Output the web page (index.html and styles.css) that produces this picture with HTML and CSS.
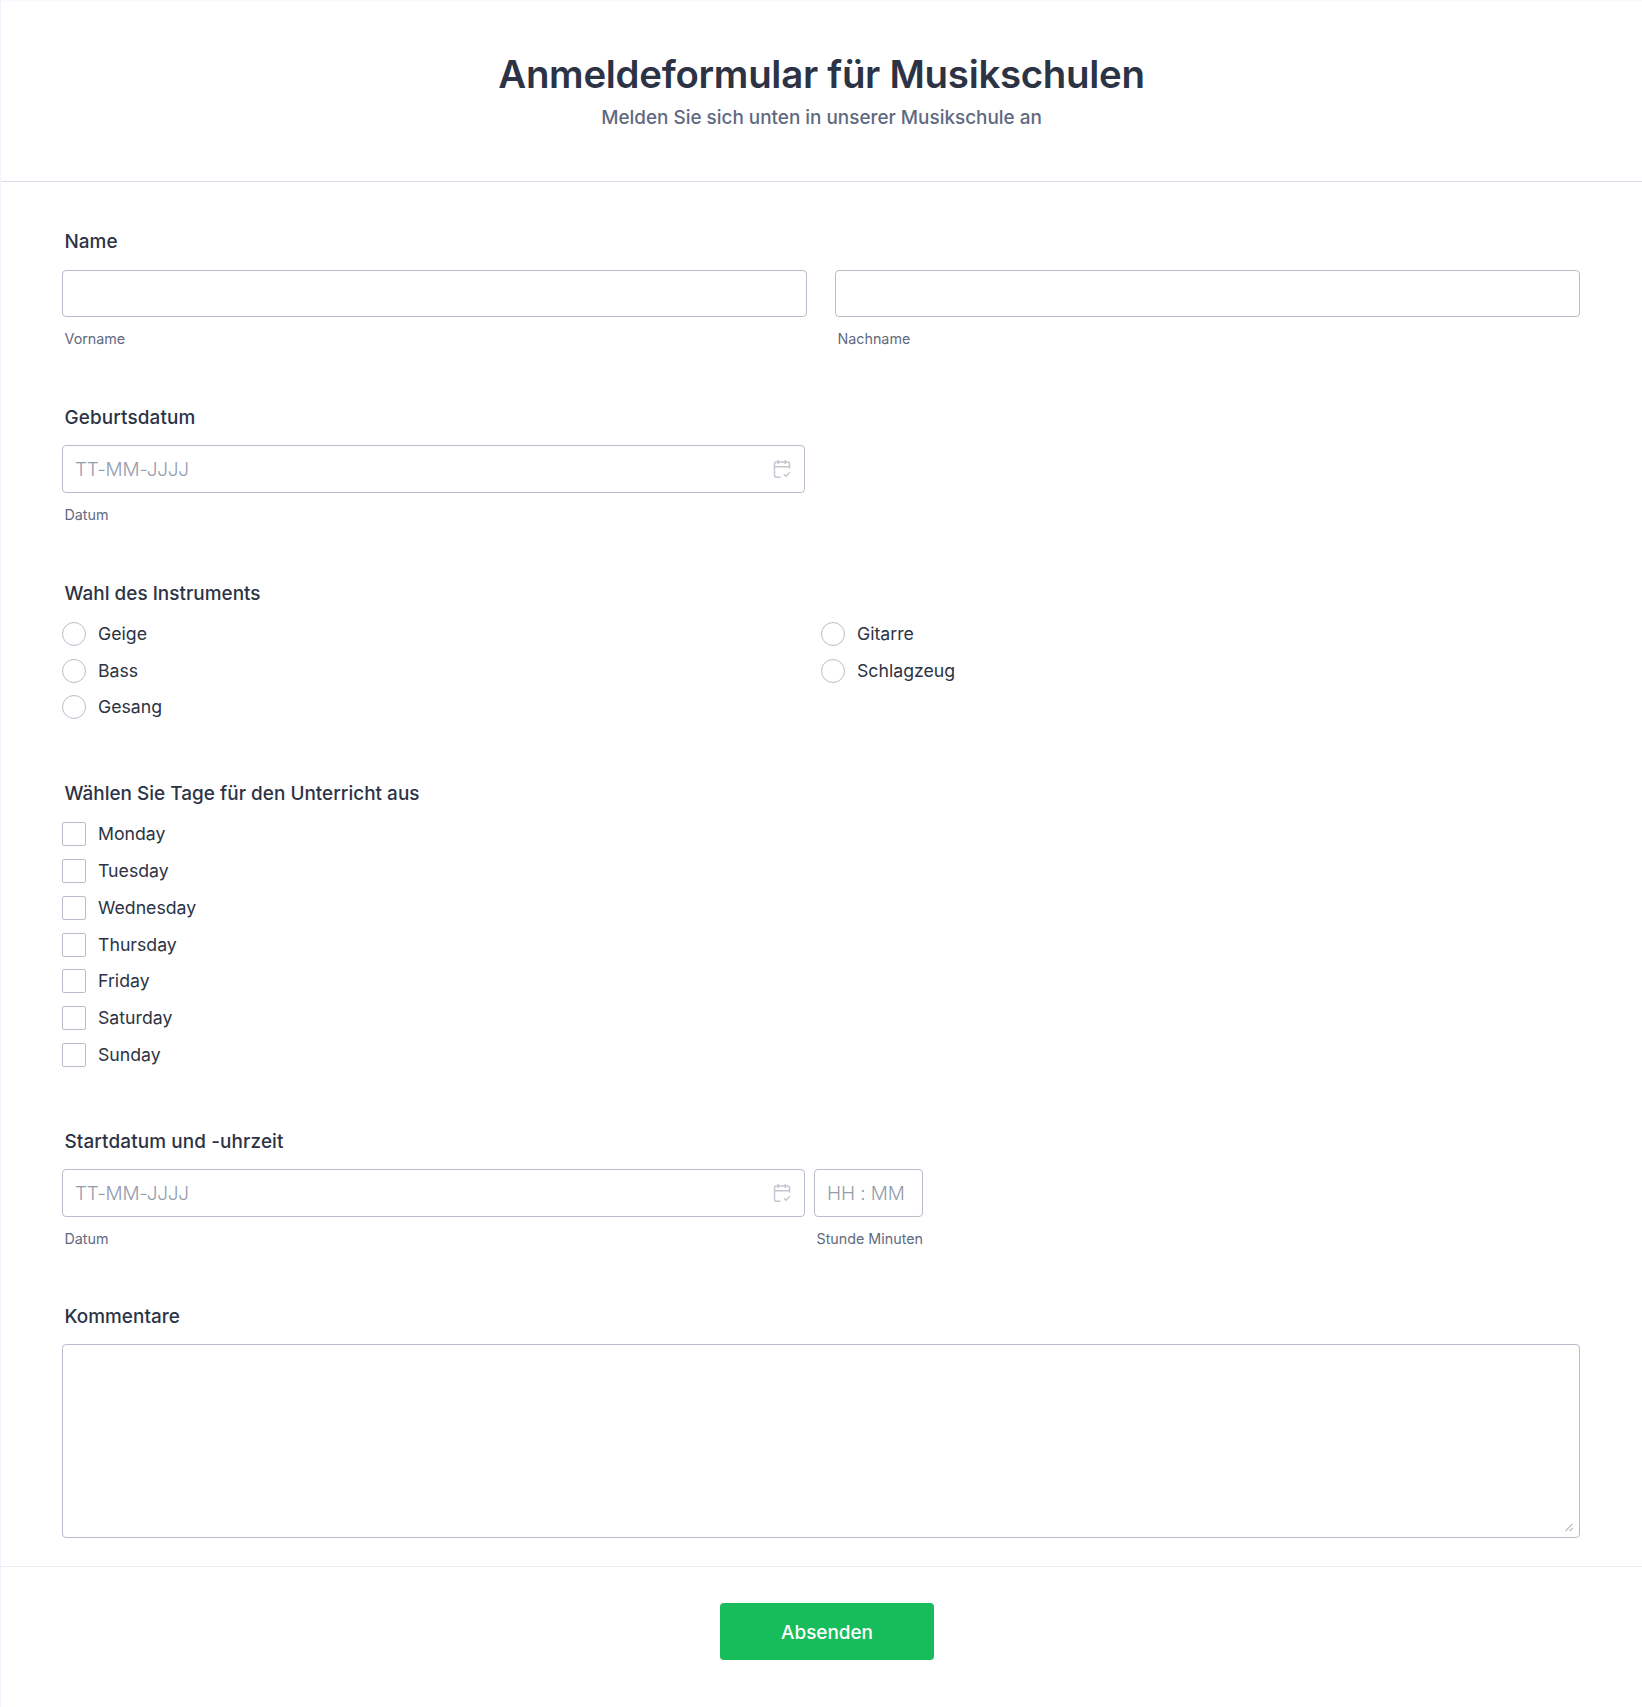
FILE: index.html
```html
<!DOCTYPE html>
<html lang="de">
<head>
<meta charset="utf-8">
<title>Anmeldeformular für Musikschulen</title>
<link rel="stylesheet" href="styles.css">
</head>
<body>
<form class="form">
  <header class="form-header">
    <h1 class="title">Anmeldeformular für Musikschulen</h1>
    <p class="subtitle">Melden Sie sich unten in unserer Musikschule an</p>
  </header>
  <main class="fields">
    <section class="field field-name">
      <h2 class="label">Name</h2>
      <div class="name-row">
        <div class="column"><input class="box" type="text" aria-label="Vorname"><span class="sublabel">Vorname</span></div>
        <div class="column"><input class="box" type="text" aria-label="Nachname"><span class="sublabel">Nachname</span></div>
      </div>
    </section>
    <section class="field field-birth">
      <h2 class="label">Geburtsdatum</h2>
      <div class="date-row">
        <div class="date">
          <div class="box"><span class="placeholder">TT-MM-JJJJ</span>
            <svg class="calendar" viewBox="0 0 18 20" fill="none"><path d="M7.5 18.2H3.6Q1.5 18.2 1.5 16.1V5Q1.5 3 3.5 3H14.5Q16.5 3 16.5 5V9.5M1.5 7.8H16.5M5.2 1V5M12.2 1V5M11 15.3L13 17.3L16.8 13.3"/></svg>
          </div>
          <span class="sublabel">Datum</span>
        </div>
      </div>
    </section>
    <section class="field field-instrument">
      <h2 class="label">Wahl des Instruments</h2>
      <div class="choices two-columns">
        <label class="choice"><input class="mark round" type="radio" name="instrument">Geige</label>
        <label class="choice"><input class="mark round" type="radio" name="instrument">Gitarre</label>
        <label class="choice"><input class="mark round" type="radio" name="instrument">Bass</label>
        <label class="choice"><input class="mark round" type="radio" name="instrument">Schlagzeug</label>
        <label class="choice"><input class="mark round" type="radio" name="instrument">Gesang</label>
      </div>
    </section>
    <section class="field field-days">
      <h2 class="label">Wählen Sie Tage für den Unterricht aus</h2>
      <div class="choices">
        <label class="choice"><input class="mark" type="checkbox">Monday</label>
        <label class="choice"><input class="mark" type="checkbox">Tuesday</label>
        <label class="choice"><input class="mark" type="checkbox">Wednesday</label>
        <label class="choice"><input class="mark" type="checkbox">Thursday</label>
        <label class="choice"><input class="mark" type="checkbox">Friday</label>
        <label class="choice"><input class="mark" type="checkbox">Saturday</label>
        <label class="choice"><input class="mark" type="checkbox">Sunday</label>
      </div>
    </section>
    <section class="field field-start">
      <h2 class="label">Startdatum und -uhrzeit</h2>
      <div class="date-row">
        <div class="date">
          <div class="box"><span class="placeholder">TT-MM-JJJJ</span>
            <svg class="calendar" viewBox="0 0 18 20" fill="none"><path d="M7.5 18.2H3.6Q1.5 18.2 1.5 16.1V5Q1.5 3 3.5 3H14.5Q16.5 3 16.5 5V9.5M1.5 7.8H16.5M5.2 1V5M12.2 1V5M11 15.3L13 17.3L16.8 13.3"/></svg>
          </div>
          <span class="sublabel">Datum</span>
        </div>
        <div class="time">
          <div class="box"><span class="placeholder time-placeholder">HH : MM</span></div>
          <span class="sublabel">Stunde Minuten</span>
        </div>
      </div>
    </section>
    <section class="field field-comments">
      <h2 class="label">Kommentare</h2>
      <div class="comments">
        <svg class="grip" viewBox="0 0 9 9"><path d="M0.5 8L7.5 0.8M4.7 8L7.8 5"/></svg>
      </div>
    </section>
  </main>
  <footer class="form-footer"><button class="submit" type="button">Absenden</button></footer>
</form>
</body>
</html>
```
FILE: styles.css
```css
* { box-sizing: border-box; }
body { margin: 0; background: #fff; color: #2c3345; font-family: Inter, "Liberation Sans", sans-serif; }
h1, h2, p { margin: 0; }
.form { height: 1707px; border-left: 1px solid #f3f3fe; border-top: 1px solid #fafafe; display: flex; flex-direction: column; }
.form-header { height: 181px; padding-top: 49px; text-align: center; border-bottom: 1px solid #d9dae7; }
.title { font-size: 38.4px; font-weight: 600; line-height: 48px; letter-spacing: -0.28px; }
.subtitle { margin-top: 8px; font-size: 18.9px; font-weight: 500; line-height: 24px; color: #5f6980; }
.fields { height: 1384px; padding: 48px 62px 0 61px; }
.label { height: 40px; padding-left: 2.5px; font-size: 18.9px; font-weight: 500; line-height: 24px; letter-spacing: 0.04px; }
.field-name, .field-birth { height: 176px; }
.field-birth .label, .field-start .label { height: 39px; letter-spacing: 0.13px; }
.field-instrument { height: 200px; }
.field-days { height: 348px; }
.field-start { height: 175px; }
.name-row { display: grid; grid-template-columns: 1fr 1fr; gap: 28px; }
.column, .date, .time { display: flex; flex-direction: column; }
.date-row { display: flex; gap: 9px; }
.date { width: 743px; }
.time { width: 109px; }
.box { width: 100%; height: 48px; display: flex; align-items: center; justify-content: space-between; padding: 0 13px 0 12px; background: #fff; border: 1px solid #b8bdc9; border-radius: 4px; outline: 0; }
.name-row .box { height: 47px; }
.placeholder { font-size: 19px; font-weight: 300; letter-spacing: -0.25px; color: #949cac; white-space: nowrap; }
.time-placeholder { letter-spacing: -0.1px; }
.calendar { width: 18px; height: 20px; stroke: #c4c7d3; stroke-width: 1.5; }
.sublabel { margin-top: 13px; padding-left: 2.5px; font-size: 14.3px; line-height: 18px; color: #5f6980; white-space: nowrap; }
.choices { display: grid; grid-auto-rows: 36.8px; }
.field-days .choices { padding-top: 0.2px; }
.two-columns { grid-template-columns: 1fr 1fr; grid-auto-rows: 36.7px; }
.choice { height: 24px; display: flex; align-items: center; gap: 12px; font-size: 17.7px; line-height: 24px; }
.mark { appearance: none; width: 24px; height: 24px; flex: none; margin: 0; border: 1px solid #b8bdc9; border-radius: 2px; background: #fff; }
.round { border-radius: 50%; }
.comments { height: 194px; padding: 0 5px 5px 0; display: flex; align-items: flex-end; justify-content: flex-end; border: 1px solid #b8bdc9; border-radius: 4px; }
.field-comments .label { height: 39px; }
.grip { width: 9px; height: 9px; fill: none; stroke: #b8bdc9; stroke-width: 1.2; }
.form-footer { flex: 1; padding: 36px 0 0 11px; border-top: 1px solid #ebebf2; text-align: center; }
.submit { width: 214px; height: 57px; padding: 2px 0 0; border: 0; border-radius: 4px; background: #18bd5b; color: #fff; font-family: inherit; font-size: 18.9px; font-weight: 500; }
```
